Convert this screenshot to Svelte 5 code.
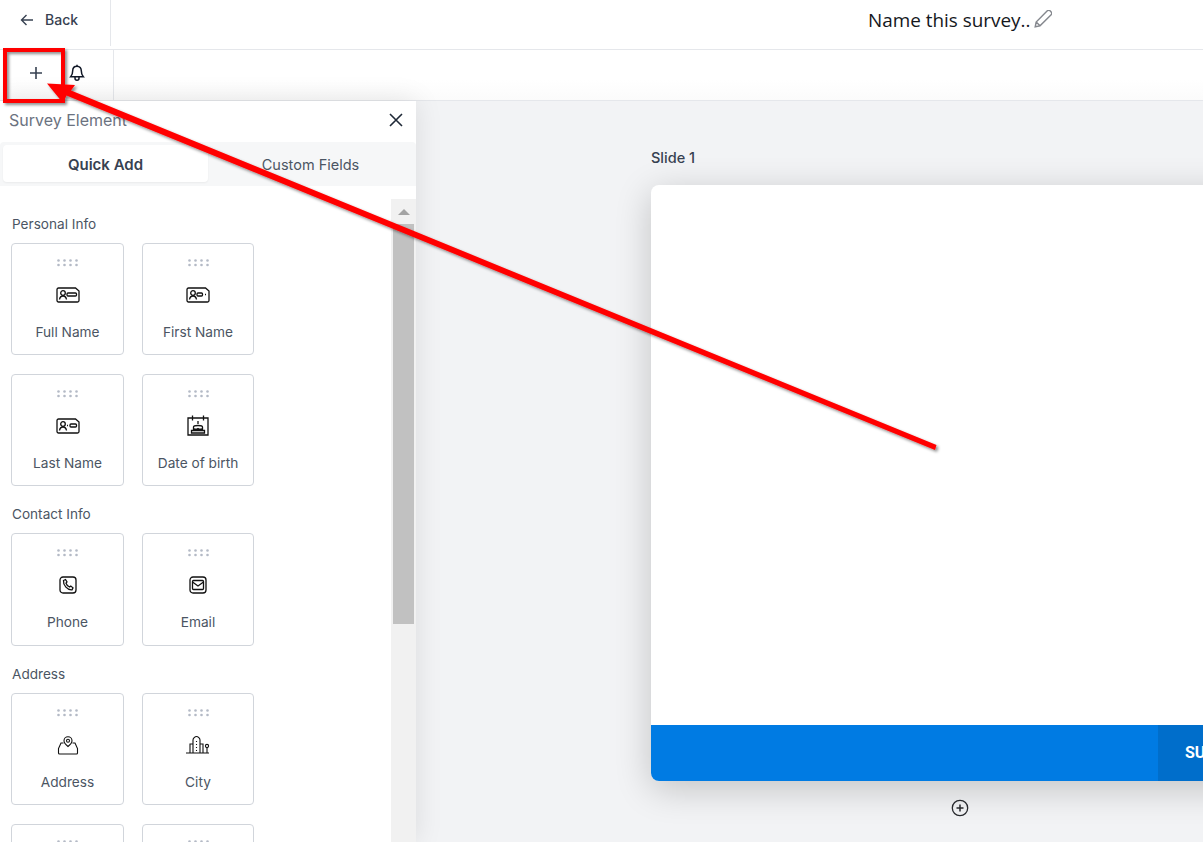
<script>
  const sections = [
    { title: 'Personal Info', items: [['Full Name','full'],['First Name','first'],['Last Name','last'],['Date of birth','dob']] },
    { title: 'Contact Info', items: [['Phone','phone'],['Email','email']] },
    { title: 'Address', items: [['Address','address'],['City','city'],['',''],['','']] }
  ];
</script>

<div class="page">
  <header class="top">
    <div class="back">
      <svg class="back-ico" viewBox="0 0 14 14" width="14" height="14"><path d="M13 7H1.500M6.500 2L1.500 7l5 5" fill="none" stroke="#374151" stroke-width="1.400"/></svg>
      <span>Back</span>
    </div>
    <div class="name">
      <span>Name this survey..</span>
      <svg viewBox="1.500 1.500 15 15" width="18" height="18"><path d="M2.500 15.500l.8-4L12.600 2.200a1.600 1.600 0 0 1 2.300 0l.9.900a1.600 1.600 0 0 1 0 2.300L6.500 14.700zM3.300 11.500l3.200 3.200" fill="none" stroke="#85888e" stroke-width="1.200"/></svg>
    </div>
  </header>

  <div class="tools">
    <div class="tool-group">
      <svg class="plus" viewBox="0 0 14 14" width="14" height="14"><path d="M7 1v12M1 7h12" stroke="#374151" stroke-width="1.600" fill="none"/></svg>
      <svg class="bell" viewBox="0 0 16 18" width="16" height="18"><path d="M8 2.200c-2.800 0-4.300 2-4.300 4.600 0 3-.7 4.500-2 6h12.600c-1.300-1.500-2-3-2-6 0-2.600-1.500-4.600-4.300-4.600zM8 .8v1.400M6 13v1.200a2 2 0 0 0 4 0V13" fill="none" stroke="#111827" stroke-width="1.500"/></svg>
    </div>
  </div>

  <div class="main">
    <aside class="side">
      <div class="side-head">
        <span>Survey Element</span>
        <svg viewBox="0 0 14 14" width="14" height="14"><path d="M1 1l12 12M13 1L1 13" stroke="#1f2937" stroke-width="1.600" fill="none"/></svg>
      </div>
      <div class="tabs">
        <div class="tab on">Quick Add</div>
        <div class="tab">Custom Fields</div>
      </div>
      <div class="side-body">
        <div class="list">
          {#each sections as s}
            <h4>{s.title}</h4>
            <div class="grid">
              {#each s.items as it}
                <div class="item">
                  <svg class="dots" viewBox="0 0 21 8" width="21" height="8">
                    {#each [1,2] as r}
                      {#each [0,1,2,3] as c}
                        <circle cx={1.500 + c * 6} cy={r === 1 ? 1.500 : 6} r="1.300" fill="#b4bac6"/>
                      {/each}
                    {/each}
                  </svg>
                  <div class="ico">
                    {#if it[1] === 'full' || it[1] === 'first' || it[1] === 'last'}
                      <svg viewBox="0 0 24 16" width="24" height="16" fill="none" stroke="#111" stroke-width="1.300">
                        <path d="M2.500 1h17l3.500 3v9.500a1.500 1.500 0 0 1-1.500 1.500h-19A1.500 1.500 0 0 1 1 13.500v-11A1.500 1.500 0 0 1 2.500 1z"/>
                        <circle cx="7" cy="6" r="2.300"/>
                        <path d="M3.500 12.500c.4-2.500 1.800-3.500 3.500-3.500s3.100 1 3.500 3.500"/>
                        {#if it[1] === 'full'}<rect x="11" y="6" width="9.500" height="3" rx="1"/>{/if}
                        {#if it[1] === 'first'}<rect x="11" y="6" width="5.500" height="3" rx="1"/><path d="M19 7.500h1"/>{/if}
                        {#if it[1] === 'last'}<path d="M11 7.500h1"/><rect x="14" y="6" width="6.500" height="3" rx="1"/>{/if}
                      </svg>
                    {:else if it[1] === 'dob'}
                      <svg viewBox="0 0 22 21" width="22" height="21" fill="none" stroke="#111" stroke-width="1.300">
                        <path d="M1 3h20v17H1zM5.500 .5v5M16.500 .500v5M11 6v3"/>
                        <path d="M6.500 12c0-2 9-2 9 0v3h-9zM4.500 15.500h13v2.500h-13zM6.500 13.500c1.500 1 3 1 4.500 0 1.500 1 3 1 4.500 0"/>
                      </svg>
                    {:else if it[1] === 'phone'}
                      <svg viewBox="0 0 18 18" width="18" height="18" fill="none" stroke="#111" stroke-width="1.300">
                        <rect x="1" y="1" width="16" height="16" rx="3"/>
                        <path d="M4.500 4.500l2-1 1.500 2.500-1 1.200c.5 1.500 1.800 3 3.600 3.800l1.200-1 2.200 1.800-1 2c-4.500.5-9-4.500-8.500-9.300z"/>
                      </svg>
                    {:else if it[1] === 'email'}
                      <svg viewBox="0 0 18 18" width="18" height="18" fill="none" stroke="#111" stroke-width="1.300">
                        <rect x="1" y="1" width="16" height="16" rx="3"/>
                        <rect x="3.500" y="4.500" width="11" height="9" rx="1"/>
                        <path d="M3.500 6L9 10l5.500-4"/>
                      </svg>
                    {:else if it[1] === 'address'}
                      <svg viewBox="0 0 22 20" width="22" height="20" fill="none" stroke="#111" stroke-width="1.100">
                        <path d="M11 11.500c-2.500-2-4-3.700-4-5.700a4 4 0 0 1 8 0c0 2-1.500 3.700-4 5.700z"/>
                        <circle cx="11" cy="5.800" r="1.500"/>
                        <path d="M6.500 8H4L1.500 13.500V18a1 1 0 0 0 1 1h17a1 1 0 0 0 1-1v-4.500L18 8h-2.500"/>
                      </svg>
                    {:else if it[1] === 'city'}
                      <svg viewBox="0 0 24 19" width="24" height="19" fill="none" stroke="#111" stroke-width="1.100">
                        <path d="M0 18h23M4 18v-9h3M7 18V5c0-1.500 2-3.500 3.500-3.500S14 3.500 14 5v13M14 9h3v9M10.500 6v1M10.500 9v1M10.500 12v1M10.500 15v1"/>
                        <circle cx="21" cy="11" r="1.600"/><path d="M21 12.600V18"/>
                      </svg>
                    {/if}
                  </div>
                  <div class="label">{it[0]}</div>
                </div>
              {/each}
            </div>
          {/each}
        </div>
        <div class="scroll">
          <div class="up"></div>
          <div class="thumb"></div>
        </div>
      </div>
    </aside>

    <section class="canvas">
      <div class="slide-label">Slide 1</div>
      <div class="card">
        <div class="card-body"></div>
        <div class="card-foot"><div class="submit">SUBMIT</div></div>
      </div>
      <svg class="add" viewBox="0 0 18 18" width="18" height="18"><circle cx="9" cy="9" r="7.700" fill="none" stroke="#27292d" stroke-width="1.300"/><path d="M9 5.500v7M5.500 9h7" stroke="#27292d" stroke-width="1.500"/></svg>
    </section>
  </div>

  <svg class="annot" viewBox="0 0 1203 842" width="1203" height="842">
    <defs>
      <filter id="sh" x="-5%" y="-5%" width="110%" height="110%">
        <feDropShadow dx="2" dy="2" stdDeviation="1.600" flood-color="#000" flood-opacity=".45"/>
      </filter>
    </defs>
    <g filter="url(#sh)">
      <rect x="5" y="50" width="58" height="51" fill="none" stroke="#f00" stroke-width="4"/>
      <path d="M47 83.500L75 85l-4 5.500L936.500 445 935 450 66.500 95.500 63 103z" fill="#f00"/>
    </g>
  </svg>
</div>

<style>
  :global(body) { margin: 0; background: #fff; }
  .page {
    position: relative;
    width: 1203px;
    height: 842px;
    overflow: hidden;
    font-family: Inter, "Liberation Sans", sans-serif;
    color: #374151;
  }
  .top {
    display: flex;
    height: 49px;
    border-bottom: 1px solid #e5e7eb;
    position: relative;
  }
  .back {
    width: 111px;
    height: 46px;
    box-sizing: border-box;
    border-right: 1px solid #e5e7eb;
    display: flex;
    align-items: center;
    padding: 0 0 7px 20px;
    gap: 11px;
    font-size: 14px;
    font-weight: 500;
    line-height: 20px;
  }
  .back-ico { flex: none; }
  .name {
    position: absolute;
    left: 868px;
    top: 7px;
    display: flex;
    align-items: flex-start;
    gap: 4px;
    font-family: "Open Sans", "Noto Sans", sans-serif;
    font-size: 18.9px;
    line-height: 27px;
    color: #15171c;
  }
  .name svg { margin-top: 3px; }
  .tools {
    height: 50px;
    border-bottom: 1px solid #e5e7eb;
    display: flex;
    background: linear-gradient(#fff 60%, #fbfbfb);
  }
  .tool-group {
    width: 114px;
    border-right: 1px solid #e5e7eb;
    display: flex;
    align-items: center;
    padding: 0 0 5px 29px;
    box-sizing: border-box;
  }
  .bell { margin-left: 26px; }
  .main { display: flex; height: 741px; }
  .side {
    width: 416px;
    flex: none;
    background: #fff;
    box-shadow: 0 0 26px rgba(0, 0, 0, .1);
    position: relative;
    z-index: 1;
    display: flex;
    flex-direction: column;
  }
  .side-head {
    height: 41px;
    flex: none;
    display: flex;
    align-items: center;
    justify-content: space-between;
    padding: 0 13px 3px 9px;
    box-sizing: border-box;
    font-size: 16px;
    color: #6b7280;
  }
  .tabs {
    height: 44px;
    flex: none;
    background: #f6f7f8;
    display: flex;
    padding: 3px 0 4px 3px;
    box-sizing: border-box;
    border-radius: 4px 4px 0 0;
  }
  .tab {
    width: 205px;
    display: flex;
    align-items: center;
    justify-content: center;
    padding-top: 2px;
    box-sizing: border-box;
    font-size: 14.5px;
    color: #4b5563;
    border-radius: 4px;
  }
  .tab.on {
    background: #fff;
    color: #374151;
    font-size: 15px;
    font-weight: 600;
    box-shadow: 0 1px 2px rgba(0, 0, 0, .05);
  }
  .side-body { flex: 1; display: flex; min-height: 0; }
  .list {
    flex: 1;
    overflow: hidden;
    padding: 27.9px 0 0 11px;
  }
  h4 {
    margin: 0 0 9px;
    padding-left: 1px;
    font-size: 13.6px;
    line-height: 20px;
    font-weight: 400;
    color: #4b5563;
  }
  .grid {
    display: grid;
    grid-template-columns: 113px 112px;
    grid-auto-rows: 112.5px;
    gap: 18.5px 18px;
    margin-bottom: 18px;
  }
  .item {
    box-sizing: border-box;
    border: 1px solid #d1d5db;
    border-radius: 4px;
    display: flex;
    flex-direction: column;
    align-items: center;
    padding-top: 15px;
  }
  .dots { flex: none; }
  .ico {
    height: 24px;
    margin-top: 16px;
    display: flex;
    align-items: center;
    justify-content: center;
  }
  .label {
    margin-top: 15px;
    font-size: 13.7px;
    line-height: 20px;
    color: #4b5563;
  }
  .scroll {
    width: 25px;
    margin-top: 13px;
    flex: none;
    background: #f1f1f1;
    position: relative;
    box-sizing: border-box;
    padding: 0 2px 0 2px;
  }
  .up {
    width: 0;
    height: 0;
    margin: 10px 0 0 5px;
    border-left: 6px solid transparent;
    border-right: 6px solid transparent;
    border-bottom: 6px solid #a3a3a3;
  }
  .thumb { margin-top: 9px; height: 400px; background: #c1c1c1; }
  .canvas {
    flex: 1;
    background: #f2f3f5;
    padding: 47px 0 0 235px;
    min-width: 0;
    overflow: hidden;
    position: relative;
  }
  .slide-label {
    font-size: 14.5px;
    line-height: 20px;
    color: #374151;
    font-weight: 500;
    margin-bottom: 17px;
  }
  .card {
    width: 800px;
    height: 596px;
    border-radius: 8px;
    background: #fff;
    box-shadow: 0 8px 36px rgba(0, 0, 0, .2);
    display: flex;
    flex-direction: column;
    overflow: hidden;
  }
  .card-body { flex: 1; }
  .card-foot {
    height: 56px;
    background: #007be3;
    display: flex;
    padding-left: 507px;
  }
  .submit {
    width: 293px;
    background: #006ecb;
    color: #fff;
    font-family: Roboto, sans-serif;
    font-weight: 700;
    font-size: 16px;
    line-height: 56px;
    padding-left: 27px;
    box-sizing: border-box;
  }
  .add { display: block; margin: 18px 0 0 300px; }
  .annot {
    position: absolute;
    left: 0;
    top: 0;
    pointer-events: none;
    z-index: 5;
  }
</style>
